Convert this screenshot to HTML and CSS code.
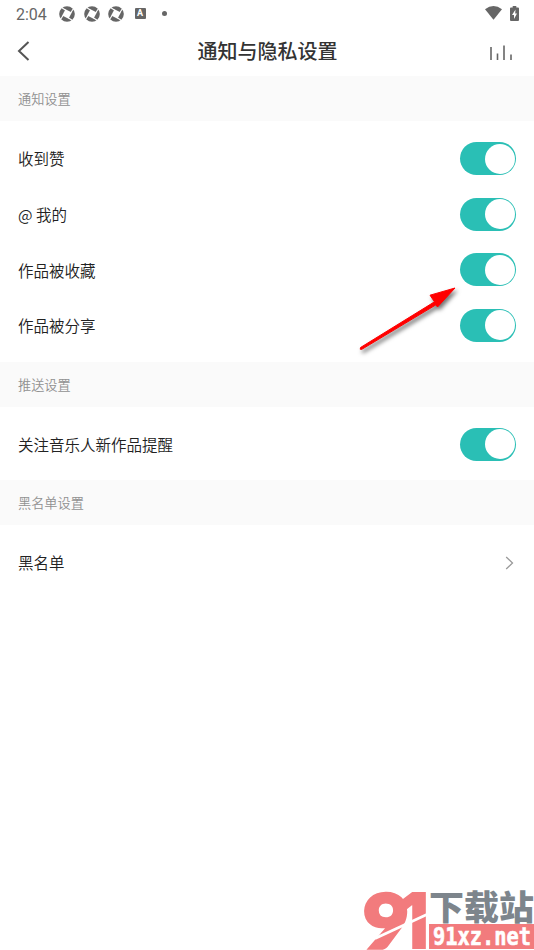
FILE: index.html
```html
<!DOCTYPE html>
<html lang="zh-CN">
<head>
<meta charset="utf-8">
<title>通知与隐私设置</title>
<link rel="stylesheet" href="styles.css">
</head>
<body>
<svg class="defs" width="0" height="0" aria-hidden="true">
  <symbol id="aperture" viewBox="0 0 16 16">
    <circle cx="8" cy="8" r="7.800" fill="#666"/>
    <path d="M6.500 3.200 12.800 6.500 9.500 12.800 3.200 9.500Z" fill="#fff"/>
    <path d="M6.800 4.200 2.500 1.500M11.800 6.800 14.500 2.500M9.200 11.800 13.500 14.500M4.200 9.200 1.500 13.500" stroke="#fff" stroke-width="1.100"/>
  </symbol>
</svg>
<div class="status">
  <span class="time">2:04</span>
  <svg class="aperture"><use href="#aperture"/></svg>
  <svg class="aperture"><use href="#aperture"/></svg>
  <svg class="aperture"><use href="#aperture"/></svg>
  <span class="badge">A</span>
  <span class="dot"></span>
  <svg class="wifi" viewBox="0 0 17 14"><path d="M0 3.2Q8.5-3 17 3.2L8.5 13.8Z" fill="#666"/></svg>
  <svg class="battery" viewBox="0 0 9 15"><path d="M2.7 0h3.6v1.5H8q1 0 1 1V14q0 1-1 1H1q-1 0-1-1V2.500q0-1 1-1h1.700Z" fill="#666"/><path d="M5.500 3.500 2 9h2v4l3-5.500H5.200Z" fill="#fff"/></svg>
</div>
<header class="header">
  <svg class="back" viewBox="0 0 14 22"><path d="M12.500 2 3 11 12.500 20" fill="none" stroke="#555" stroke-width="2"/></svg>
  <h1>通知与隐私设置</h1>
  <svg class="bars" viewBox="0 0 24 16"><path d="M2 2V15M8.500 8.500V15M15 .5V15M22 9.500V15" stroke="#666" stroke-width="1.600"/></svg>
</header>
<main>
  <h2>通知设置</h2>
  <section>
    <div class="row"><span>收到赞</span><i class="toggle"></i></div>
    <div class="row"><span>@ 我的</span><i class="toggle"></i></div>
    <div class="row"><span>作品被收藏</span><i class="toggle"></i></div>
    <div class="row"><span>作品被分享</span><i class="toggle"></i></div>
  </section>
  <h2>推送设置</h2>
  <section>
    <div class="row"><span>关注音乐人新作品提醒</span><i class="toggle"></i></div>
  </section>
  <h2>黑名单设置</h2>
  <section>
    <div class="row"><span>黑名单</span><svg class="chevron" viewBox="0 0 9 14"><path d="M1.200 1 7.500 7 1.200 13" fill="none" stroke="#999" stroke-width="1.300"/></svg></div>
  </section>
</main>
<svg class="arrow" viewBox="0 0 110 80">
  <path d="M5.500 72.500 79.500 26.800 75 20.200 100 13 82.500 32 81 29.800 6.500 74.500Q4.500 75 5.500 72.500Z" fill="#f00" stroke="#f00"/>
</svg>
<div class="watermark">
  <svg class="mark" viewBox="0 0 64 60">
    <text class="nine" transform="translate(-1 57.500) scale(1.060 1)">9</text>
    <text class="one" transform="translate(34 59) scale(.88 1)">1</text>
    <path d="M11 48.500Q36 37 64 24" fill="none" stroke="#fff" stroke-width="2.800"/>
  </svg>
  <svg class="site" viewBox="0 0 106 60">
    <text class="name" x="0" y="30" textLength="105" lengthAdjust="spacingAndGlyphs">下载站</text>
    <rect x="0" y="34" width="106" height="25" fill="#f27b7d"/>
    <text class="domain" x="4" y="55" textLength="98" lengthAdjust="spacingAndGlyphs">91xz.net</text>
  </svg>
</div>
</body>
</html>
```
FILE: styles.css
```css
* { box-sizing: border-box; }
body {
  margin: 0;
  width: 534px;
  height: 950px;
  position: relative;
  overflow: hidden;
  background: #fff;
  color: #333;
  font-family: "Noto Sans CJK SC", sans-serif;
}
.defs { display: none; }
.status {
  display: flex;
  align-items: center;
  height: 27px;
  padding: 0 15px 0 16px;
}
.time {
  width: 43px;
  font: 16px/27px Roboto, sans-serif;
  color: #666;
  padding-top: 1px;
}
.aperture { width: 16px; height: 16px; margin-right: 8.500px; }
.badge {
  width: 11px;
  height: 11px;
  margin-left: 2px;
  border-radius: 1px;
  background: #666;
  color: #fff;
  font: bold 9px/11px Roboto, sans-serif;
  text-align: center;
}
.dot { width: 5px; height: 5px; margin-left: 16px; border-radius: 50%; background: #666; }
.wifi { width: 17px; height: 14px; margin: -1px 0 0 auto; }
.battery { width: 9px; height: 15px; margin: -1px 0 0 8px; }
.header {
  display: flex;
  align-items: center;
  justify-content: space-between;
  height: 49px;
  padding: 0 21px 2px 16px;
}
.back { width: 14px; height: 22px; margin-right: 16px; }
.header h1 { margin: 0; font-size: 20px; line-height: 30px; font-weight: 500; }
.bars { width: 24px; height: 16px; margin-top: 4px; }
h2 {
  height: 45px;
  margin: 0;
  padding-left: 18px;
  background: #fafafa;
  color: #919191;
  font-size: 13.200px;
  line-height: 45px;
  font-weight: 350;
}
section { padding: 9.700px 18px 8.300px; }
.row {
  display: flex;
  align-items: center;
  justify-content: space-between;
  height: 55.650px;
  font-size: 15.500px;
  font-weight: 350;
  color: #222;
}
.row span { margin-top: -.5px; }
.toggle {
  width: 56px;
  height: 33px;
  padding: 1.500px;
  border-radius: 17px;
  background: #2abfb5;
}
.toggle::after {
  content: "";
  display: block;
  width: 30px;
  height: 30px;
  margin-left: auto;
  border-radius: 50%;
  background: #fff;
}
.chevron { width: 9px; height: 14px; margin-right: 2px; }
.arrow {
  position: absolute;
  left: 355px;
  top: 275px;
  width: 110px;
  height: 80px;
  filter: drop-shadow(2px 3px 2px rgba(0, 0, 0, .55));
}
.watermark {
  position: absolute;
  left: 364px;
  top: 890px;
  display: flex;
}
.mark { width: 64px; height: 60px; }
.site { width: 106px; height: 60px; margin-left: 1px; }
.nine { font: 900 75px Lato, sans-serif; fill: #f27b7d; stroke: #f27b7d; stroke-width: 3.500px; }
.one { font: 900 78px Inter, sans-serif; fill: #f27b7d; }
.name { font: 900 34px "Noto Sans CJK SC", sans-serif; fill: #7d858c; }
.domain { font: 900 24px "DejaVu Sans Mono", monospace; fill: #fff; stroke: #fff; stroke-width: .6px; }
```
